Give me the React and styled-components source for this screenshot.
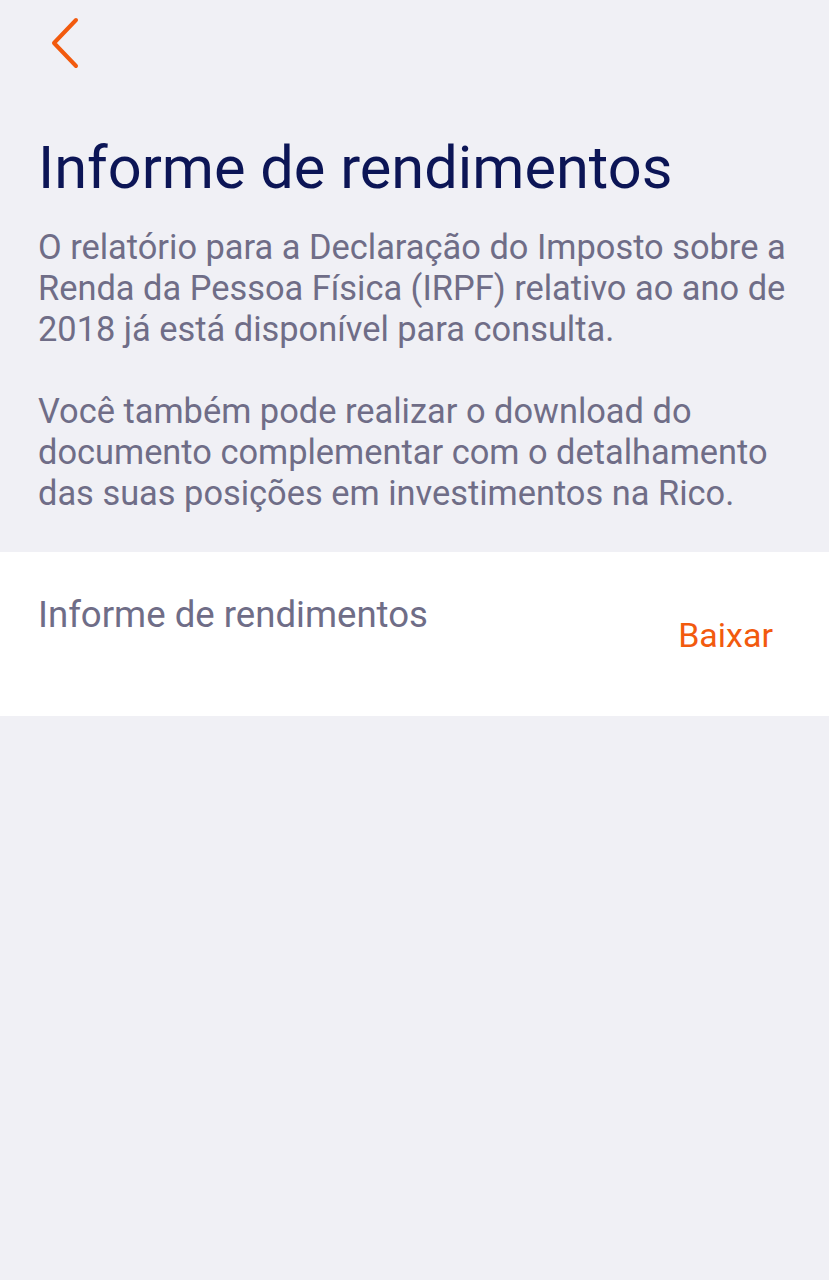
import React from "react";
import styled, { createGlobalStyle } from "styled-components";

const Global = createGlobalStyle`
  html, body {
    margin: 0;
    padding: 0;
    background: #f0f0f5;
  }
  body {
    font-family: Roboto, "Noto Sans", sans-serif;
  }
`;

const Page = styled.div`
  min-height: 1280px;
  background: #f0f0f5;
`;

const Header = styled.div`
  height: 90px;
  padding: 16px 0 0 46px;
  box-sizing: border-box;
`;

const BackButton = styled.button`
  border: 0;
  background: none;
  padding: 0;
  width: 40px;
  height: 56px;
  cursor: pointer;
`;

const Intro = styled.div`
  padding: 43px 30px 38px 38px;
`;

const Title = styled.h1`
  margin: 0 0 24px;
  font-size: 59.5px;
  font-weight: 400;
  line-height: 70px;
  color: #0c1556;
`;

const Paragraph = styled.p`
  margin: 0 0 41px;
  font-size: 34.4px;
  line-height: 41px;
  color: #6f6d87;
  &:last-child {
    margin-bottom: 0;
  }
`;

const Row = styled.div`
  background: #fff;
  height: 164px;
  display: flex;
  justify-content: space-between;
  padding: 0 56px 0 38px;
  box-sizing: border-box;
`;

const RowLabel = styled.span`
  margin-top: 41px;
  font-size: 36.6px;
  line-height: 44px;
  color: #6f6d87;
`;

const Action = styled.button`
  align-self: flex-start;
  margin-top: 61px;
  border: 0;
  background: none;
  padding: 0;
  font-family: inherit;
  font-size: 34px;
  line-height: 44px;
  color: #f25a0e;
  cursor: pointer;
`;

export default function App() {
  return (
    <Page>
      <Global />
      <Header>
        <BackButton aria-label="Voltar">
          <svg width="40" height="56" viewBox="0 0 40 56">
            <path
              d="M30 4 L8 27 L30 50"
              fill="none"
              stroke="#f25a0e"
              strokeWidth="4"
              strokeLinecap="round"
              strokeLinejoin="round"
            />
          </svg>
        </BackButton>
      </Header>
      <Intro>
        <Title>Informe de rendimentos</Title>
        <Paragraph>
          O relatório para a Declaração do Imposto sobre a Renda da Pessoa
          Física (IRPF) relativo ao ano de 2018 já está disponível para
          consulta.
        </Paragraph>
        <Paragraph>
          Você também pode realizar o download do documento complementar com
          o detalhamento das suas posições em investimentos na Rico.
        </Paragraph>
      </Intro>
      <Row>
        <RowLabel>Informe de rendimentos</RowLabel>
        <Action>Baixar</Action>
      </Row>
    </Page>
  );
}
